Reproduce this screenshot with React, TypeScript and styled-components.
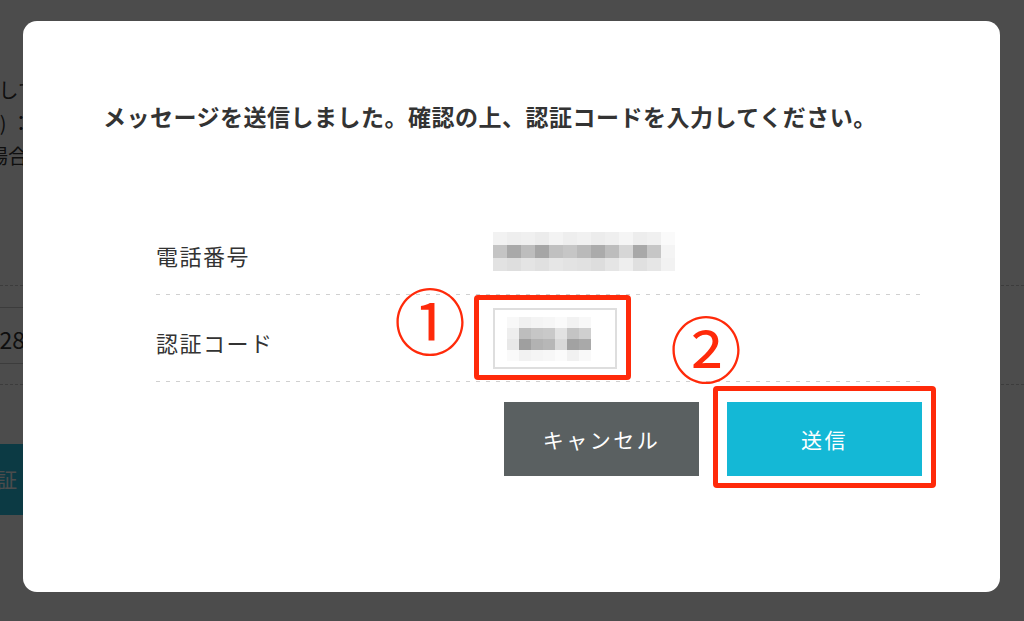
import styled, { createGlobalStyle } from 'styled-components'

const GlobalStyle = createGlobalStyle`
  html, body {
    margin: 0;
    padding: 0;
  }
  body {
    width: 1024px;
    height: 621px;
    overflow: hidden;
    background: #fff;
    color: #333;
    font-family: 'Noto Sans CJK JP', 'Noto Sans', sans-serif;
  }
`

const RED = '#ff2a0a'

// the page that sits behind the dialog
const Page = styled.div`
  position: relative;
  width: 1024px;
  height: 621px;
  overflow: hidden;
`

const BackColumn = styled.div`
  width: 420px;
  margin-left: -382px;
  padding-top: 73px;
`

const BackLine = styled.p<{ $inset: number }>`
  margin: 0;
  padding-right: ${({ $inset }) => $inset}px;
  text-align: right;
  font-size: 20px;
  line-height: 33px;
  white-space: nowrap;
`

const BackForm = styled.div`
  margin-top: 113px;
  width: 1024px;
  padding: 21px 0 20px;
  border-top: 1px dashed #c8c8c8;
  border-bottom: 1px dashed #c8c8c8;
`

const BackInput = styled.div`
  display: flex;
  align-items: center;
  box-sizing: border-box;
  width: 700px;
  height: 57px;
  margin-left: -300px;
  padding-top: 7px;
  border-top: 1px solid #c8c8c8;
  border-bottom: 1px solid #c8c8c8;
`

const BackValue = styled.span`
  width: 325px;
  text-align: right;
  font-size: 23px;
`

const BackButton = styled.div`
  display: flex;
  align-items: center;
  justify-content: flex-end;
  box-sizing: border-box;
  width: 200px;
  height: 71px;
  margin: 59px 0 0 -160px;
  padding-right: 23px;
  background: #28c1e3;
  color: #fff;
  font-size: 20px;
`

// dialog
const Overlay = styled.div`
  position: absolute;
  inset: 0;
  display: flex;
  box-sizing: border-box;
  padding: 21px 24px 29px 23px;
  background: rgba(0, 0, 0, 0.7);
`

const Modal = styled.div`
  flex: 1;
  display: flex;
  flex-direction: column;
  padding: 79px 78px 0 80px;
  background: #fff;
  border-radius: 14px;
`

const Heading = styled.h2`
  margin: 0;
  font-size: 23px;
  font-weight: 700;
  line-height: 33px;
  letter-spacing: 0.5px;
  color: #333;
  white-space: nowrap;
`

const Table = styled.div`
  margin: 75px 0 0 53px;
`

const Row = styled.div`
  display: flex;
  align-items: center;
  height: 87px;
  background: linear-gradient(to right, #d0d0d0 4px, transparent 4px) left bottom / 10px 1px repeat-x;
`

const Label = styled.div`
  width: 337px;
  padding-top: 6px;
  font-size: 22px;
  letter-spacing: 1.5px;
  color: #333;
`

const Value = styled.div`
  flex: 1;
  display: flex;
  align-items: center;
`

const Mosaic = styled.div<{ $cols: number; $w: number; $h: number }>`
  display: grid;
  grid-template-columns: repeat(${({ $cols }) => $cols}, ${({ $w }) => $w}px);
  grid-auto-rows: ${({ $h }) => $h}px;
`

const Cell = styled.span``

const Callout = styled.div<{ $box: string }>`
  position: relative;
  display: inline-flex;
  &::after {
    content: '';
    position: absolute;
    inset: ${({ $box }) => $box};
    border: 5px solid ${RED};
    border-radius: 4px;
    pointer-events: none;
  }
`

const Badge = styled.span<{ $left: number; $top: number }>`
  position: absolute;
  left: ${({ $left }) => $left}px;
  top: ${({ $top }) => $top}px;
  color: ${RED};
  font-family: 'Noto Sans CJK JP', sans-serif;
  font-size: 72px;
  line-height: 1;
`

const CodeInput = styled.div`
  display: flex;
  align-items: center;
  box-sizing: border-box;
  width: 124px;
  height: 61px;
  padding-left: 12px;
  border: 2px solid #dedede;
  background: #fff;
`

const Actions = styled.div`
  display: flex;
  justify-content: flex-end;
  gap: 28px;
  margin-top: 20px;
`

const Button = styled.button<{ $tone: 'dark' | 'accent' }>`
  width: 195px;
  height: 74px;
  border: 0;
  border-radius: 0;
  background: ${({ $tone }) => ($tone === 'dark' ? '#5a6061' : '#14b8d6')};
  color: #fff;
  font-family: inherit;
  font-size: 21px;
  letter-spacing: 2.5px;
  cursor: pointer;
`

const phoneCells = [
  ['#f2f2f2', '#eeeeee', '#f0f0f0', '#ececec', '#f3f3f3', '#eeeeee', '#f1f1f1', '#ececec', '#efefef', '#f5f5f5', '#ededed', '#f0f0f0', '#fafafa'],
  ['#c4c4c4', '#a9a9a9', '#bdbdbd', '#a6a6a6', '#c0c0c0', '#c6c6c6', '#bababa', '#ababab', '#bdbdbd', '#d6d6d6', '#a8a8a8', '#c6c6c6', '#f4f4f4'],
  ['#e2e2e2', '#dedede', '#e4e4e4', '#e0e0e0', '#e6e6e6', '#e3e3e3', '#e1e1e1', '#dddddd', '#e5e5e5', '#eeeeee', '#e0e0e0', '#e6e6e6', '#f2f2f2'],
]

const codeCells = [
  ['#f8f8f8', '#f0f0f0', '#f4f4f4', '#f6f6f6', '#fafafa', '#f2f2f2', '#f8f8f8'],
  ['#eeeeee', '#bdbdbd', '#c6c6c6', '#c9c9c9', '#e2e2e2', '#c4c4c4', '#cfcfcf'],
  ['#e8e8e8', '#9f9f9f', '#b2b2b2', '#b7b7b7', '#d9d9d9', '#a2a2a2', '#a9a9a9'],
  ['#fafafa', '#f2f2f2', '#f5f5f5', '#f7f7f7', '#fbfbfb', '#f1f1f1', '#f9f9f9'],
]

// pixelated stand-in for a masked value
const Masked = ({ cells, w, h }: { cells: string[][]; w: number; h: number }) => (
  <Mosaic $cols={cells[0].length} $w={w} $h={h}>
    {cells.flat().map((c, i) => (
      <Cell key={i} style={{ background: c }} />
    ))}
  </Mosaic>
)

export default function App() {
  return (
    <>
      <GlobalStyle />
      <Page>
        <BackColumn>
          <BackLine $inset={0}>届いたメッセージを確認して</BackLine>
          <BackLine $inset={7}>（SMS) ：</BackLine>
          <BackLine $inset={10}>届かない場合</BackLine>
        </BackColumn>
        <BackForm>
          <BackInput>
            <BackValue>09012345628</BackValue>
          </BackInput>
        </BackForm>
        <BackButton>認証</BackButton>

        <Overlay>
          <Modal>
            <Heading>メッセージを送信しました。確認の上、認証コードを入力してください。</Heading>
            <Table>
              <Row>
                <Label>電話番号</Label>
                <Value>
                  <Masked cells={phoneCells} w={14} h={13} />
                </Value>
              </Row>
              <Row>
                <Label>認証コード</Label>
                <Value>
                  <Callout $box="-13px -14px -11px -19px">
                    <Badge $left={-99} $top={-26}>①</Badge>
                    <CodeInput>
                      <Masked cells={codeCells} w={12} h={11} />
                    </CodeInput>
                  </Callout>
                </Value>
              </Row>
            </Table>
            <Actions>
              <Button $tone="dark">キャンセル</Button>
              <Callout $box="-16px -14px -12px -14px">
                <Badge $left={-57} $top={-92}>②</Badge>
                <Button $tone="accent">送信</Button>
              </Callout>
            </Actions>
          </Modal>
        </Overlay>
      </Page>
    </>
  )
}
